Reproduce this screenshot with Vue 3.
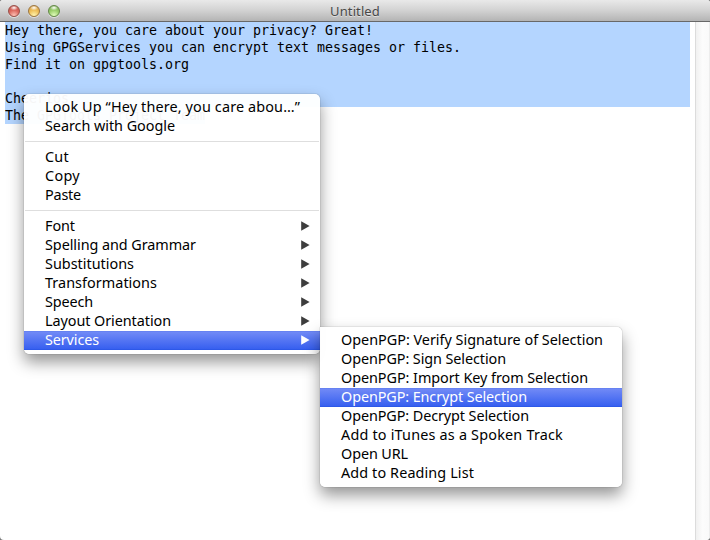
<script setup>
import { ref, onMounted } from 'vue'

const lights = ['red', 'yellow', 'green']

const lines = [
  'Hey there, you care about your privacy? Great!',
  'Using GPGServices you can encrypt text messages or files.',
  'Find it on gpgtools.org',
  '',
  'Cheerios',
]
const lastLine = 'The GPGTools Project Team'

const contextMenu = [
  { label: 'Look Up “Hey there, you care abou…”', width: 255 },
  { label: 'Search with Google', width: 130 },
  { separator: true },
  { label: 'Cut', width: 24 },
  { label: 'Copy', width: 35 },
  { label: 'Paste', width: 36 },
  { separator: true },
  { label: 'Font', width: 30, submenu: true },
  { label: 'Spelling and Grammar', width: 151, submenu: true },
  { label: 'Substitutions', width: 89, submenu: true },
  { label: 'Transformations', width: 112, submenu: true },
  { label: 'Speech', width: 48, submenu: true },
  { label: 'Layout Orientation', width: 126, submenu: true },
  { label: 'Services', width: 54, submenu: true, active: true },
]

const servicesMenu = [
  { label: 'OpenPGP: Verify Signature of Selection', width: 262 },
  { label: 'OpenPGP: Sign Selection', width: 165 },
  { label: 'OpenPGP: Import Key from Selection', width: 247 },
  { label: 'OpenPGP: Encrypt Selection', width: 186, active: true },
  { label: 'OpenPGP: Decrypt Selection', width: 188 },
  { label: 'Add to iTunes as a Spoken Track', width: 222 },
  { label: 'Open URL', width: 67 },
  { label: 'Add to Reading List', width: 133 },
]

const menus = [
  { name: 'context', items: contextMenu },
  { name: 'services', items: servicesMenu },
]

// Tracks each label so that it fills its measured menu width.
const root = ref(null)
onMounted(() => {
  root.value.querySelectorAll('[data-width]').forEach((el) => {
    const natural = el.getBoundingClientRect().width
    const spacing = (Number(el.dataset.width) - natural) / el.textContent.length
    el.style.letterSpacing = spacing.toFixed(3) + 'px'
  })
})
</script>

<template>
  <div ref="root" class="window">
    <header class="titlebar">
      <div class="lights">
        <span v-for="l in lights" :key="l" class="light" :class="l"></span>
      </div>
      <h1 class="title">Untitled</h1>
    </header>
    <div class="body">
      <main class="document">
        <div v-for="(line, i) in lines" :key="i" class="line">{{ line }}</div>
        <div class="line last">{{ lastLine }}</div>
      </main>
      <div class="scrollbar"></div>
    </div>

    <ul v-for="menu in menus" :key="menu.name" class="menu" :class="menu.name">
      <li
        v-for="(item, i) in menu.items"
        :key="i"
        :class="[item.separator ? 'separator' : 'item', { active: item.active }]"
      >
        <span v-if="item.label" class="label" :data-width="item.width">{{ item.label }}</span>
        <svg v-if="item.submenu" class="arrow" width="9" height="10" viewBox="0 0 9 10">
          <path d="M0.2 0.2 L8.6 5 L0.2 9.8 Z" fill="currentColor" />
        </svg>
      </li>
    </ul>
  </div>
</template>

<style>
body {
  margin: 0;
  background: #777;
}
</style>

<style scoped>
.window {
  position: relative;
  display: flex;
  flex-direction: column;
  width: 710px;
  height: 540px;
  overflow: hidden;
  border-radius: 3px 3px 4px 4px;
  background: #fff;
}
.titlebar {
  display: grid;
  grid-template-columns: 100px 1fr 100px;
  align-items: center;
  box-sizing: border-box;
  height: 22px;
  border-bottom: 1px solid #686868;
  background: linear-gradient(#e9e9e9, #d2d2d2 50%, #b4b4b4);
}
.lights {
  display: flex;
  gap: 8px;
  padding: 1px 0 0 8px;
}
.light {
  box-sizing: border-box;
  width: 12px;
  height: 12px;
  border-radius: 50%;
  border: 1px solid;
  box-shadow: 0 1px 0 rgba(255, 255, 255, 0.5);
}
.red {
  border-color: #985049;
  background: radial-gradient(ellipse 4px 2.5px at 50% 18%, #fff, transparent),
    radial-gradient(circle at 50% 95%, #ffc4b8, #dc6a60 50%, #c04a42);
}
.yellow {
  border-color: #9c7640;
  background: radial-gradient(ellipse 4px 2.5px at 50% 18%, #fff, transparent),
    radial-gradient(circle at 50% 95%, #fff6b0, #efc05a 50%, #cf9440);
}
.green {
  border-color: #648848;
  background: radial-gradient(ellipse 4px 2.5px at 50% 18%, #fff, transparent),
    radial-gradient(circle at 50% 95%, #e4ffbe, #9ccf6c 50%, #74a852);
}
.title {
  margin: 0;
  font: 400 13px/20px 'Noto Sans', sans-serif;
  letter-spacing: 0.1px;
  text-align: center;
  color: #484848;
  text-shadow: 0 1px 0 rgba(255, 255, 255, 0.5);
}
.body {
  display: flex;
  flex: 1;
}
.document {
  flex: 1;
  padding: 0 5px;
  font: 13.3px/17px 'DejaVu Sans Mono', monospace;
  letter-spacing: -0.007px;
  color: #000;
}
.line {
  height: 17px;
  background: #b4d5ff;
  white-space: pre;
}
.last {
  width: 200px;
}
.scrollbar {
  box-sizing: border-box;
  width: 15px;
  border-left: 1px solid #dcdcdc;
  border-right: 1px solid #ededed;
  background: linear-gradient(90deg, #f1f1f1, #fcfcfc 50%, #fafafa);
}
.menu {
  position: absolute;
  box-sizing: border-box;
  margin: 0;
  padding: 4px 0;
  list-style: none;
  border-radius: 5px;
  background: rgba(255, 255, 255, 0.96);
  box-shadow: 0 0 1px rgba(0, 0, 0, 0.6), 0 8px 16px rgba(0, 0, 0, 0.42);
  font: 14.4px/17px 'Noto Sans', sans-serif;
  color: #000;
}
.context {
  left: 24px;
  top: 94px;
  width: 296px;
}
.services {
  left: 320px;
  top: 327px;
  width: 302px;
  border-top-left-radius: 0;
}
.item {
  display: flex;
  align-items: center;
  justify-content: space-between;
  box-sizing: border-box;
  height: 19px;
  padding: 0 10px 2px 21px;
}
.label {
  white-space: nowrap;
}
.arrow {
  color: #3d3d3d;
}
.active {
  color: #fff;
  background: linear-gradient(#5f7cee, #7089f6 6%, #3961f0 92%, #2854e4);
}
.active .arrow {
  color: #fff;
}
.separator {
  box-sizing: border-box;
  height: 12px;
  margin: 0 1px;
  padding-top: 5px;
}
.separator::before {
  content: '';
  display: block;
  height: 1px;
  background: #dedede;
}
</style>
